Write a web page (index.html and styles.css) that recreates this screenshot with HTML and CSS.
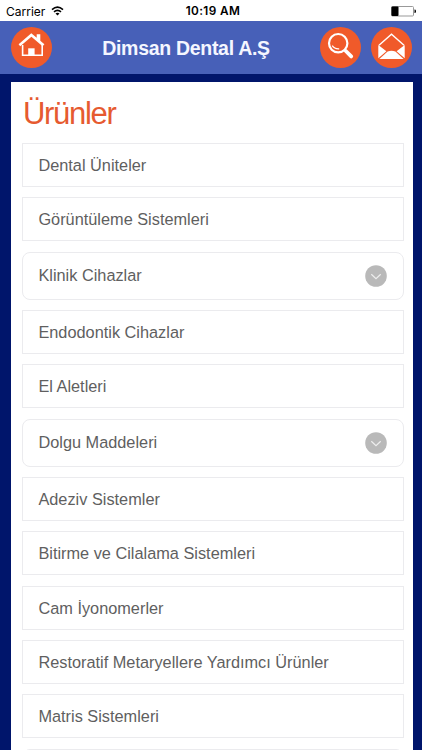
FILE: index.html
```html
<!DOCTYPE html>
<html lang="tr">
<head>
    <meta charset="UTF-8">
    <meta name="viewport" content="width=device-width, initial-scale=1">
    <title>Dimsan Dental A.Ş</title>
    <link rel="stylesheet" href="styles.css">
</head>
<body>
    <div class="status">
        <div class="carrier">
            <span>Carrier</span>
            <svg class="wifi" viewBox="0 0 13 10">
                <path d="M1 3.6 Q6.5 -1.2 12 3.6 M3 5.9 Q6.5 2.9 10 5.9" fill="none" stroke="#000" stroke-width="1.6"/>
                <path d="M4.5 7.5 Q6.5 5.9 8.5 7.5 L6.5 9.6 Z"/>
            </svg>
        </div>
        <span class="time">10:19 AM</span>
        <svg class="battery" viewBox="0 0 25 11">
            <rect x=".5" y=".5" width="22" height="9.5" rx="1" fill="#fff" stroke="#999"/>
            <rect x=".5" y=".5" width="7" height="9.5" rx="1"/>
            <path d="M23.5 3.5 h.5 q1 0 1 1.8 t-1 1.8 h-.5z"/>
        </svg>
    </div>

    <div class="header">
        <a class="btn">
            <svg viewBox="0 0 41 41">
                <path d="M11.6 18 V28.2 H31.2 V18" fill="none" stroke="#fff" stroke-width="1.6"/>
                <path d="M7.6 17.3 L20.3 6.3 L25.7 10.8 V7.2 H29.3 V13.8 L33.4 17.3 L31.6 19.2 L20.4 9.8 L9.2 19.2 Z" fill="#fff"/>
                <path d="M17.2 21.3 h6.4 v7.5 h-6.4z" fill="#fff"/>
            </svg>
        </a>
        <h1>Dimsan Dental A.Ş</h1>
        <a class="btn search">
            <svg viewBox="0 0 41 41">
                <circle cx="18.2" cy="16.2" r="9.2" fill="none" stroke="#fff" stroke-width="2.2"/>
                <path d="M12.2 18.7 Q14.5 22.2 19.2 21.9" fill="none" stroke="#fff" stroke-width="1.2"/>
                <path d="M24.4 22.6 L26.2 24.4" stroke="#fff" stroke-width="2.4"/>
                <path d="M25.8 24 L31.2 29.4" stroke="#fff" stroke-width="3.8" stroke-linecap="round"/>
            </svg>
        </a>
        <a class="btn mail">
            <svg viewBox="0 0 41 41">
                <path d="M8 18.2 L20.5 7.2 L33 18.2" fill="none" stroke="#fff" stroke-width="1.4"/>
                <path d="M7.3 18 L15.4 24.3 L7.3 31.3 Z M33.7 18 L25.6 24.3 L33.7 31.3 Z" fill="#fff"/>
                <path d="M8.4 32 L16.6 24.6 Q20.5 22.8 24.4 24.6 L32.6 32 Z" fill="#fff"/>
            </svg>
        </a>
    </div>

    <div class="content">
        <h2>Ürünler</h2>
        <ul class="menu">
            <li>Dental Üniteler</li>
            <li>Görüntüleme Sistemleri</li>
            <li class="sub">Klinik Cihazlar
                <svg viewBox="0 0 22 22"><circle cx="11" cy="11" r="10.8"/><path d="M6.3 9.3 L11 13.6 L15.7 9.3"/></svg>
            </li>
            <li>Endodontik Cihazlar</li>
            <li>El Aletleri</li>
            <li class="sub">Dolgu Maddeleri
                <svg viewBox="0 0 22 22"><circle cx="11" cy="11" r="10.8"/><path d="M6.3 9.3 L11 13.6 L15.7 9.3"/></svg>
            </li>
            <li>Adeziv Sistemler</li>
            <li>Bitirme ve Cilalama Sistemleri</li>
            <li>Cam İyonomerler</li>
            <li>Restoratif Metaryellere Yardımcı Ürünler</li>
            <li>Matris Sistemleri</li>
            <li class="sub"></li>
        </ul>
    </div>
</body>
</html>
```
FILE: styles.css
```css
*{
    box-sizing: border-box;
}
body{
    margin: 0;
    height: 750px;
    overflow: hidden;
    background-color: #00156b;
    font-family: "Liberation Sans", Arial, sans-serif;
}
.status{
    display: grid;
    grid-template-columns: 1fr auto 1fr;
    align-items: center;
    height: 21px;
    padding: 1px 6px 0 6px;
    background-color: #fff;
    color: #000;
    font-family: Inter, sans-serif;
    font-size: 12px;
}
.carrier{
    display: flex;
    align-items: center;
    gap: 6px;
}
.wifi{
    width: 13px;
    height: 10px;
    margin-top: -1px;
}
.time{
    margin-left: 4px;
    font-weight: 600;
    font-size: 11.8px;
    letter-spacing: 0.4px;
}
.battery{
    width: 25px;
    height: 11px;
    justify-self: end;
}
.header{
    display: flex;
    align-items: center;
    height: 53px;
    padding: 0 10px 0 11px;
    background-color: #4760b8;
}
.header h1{
    flex: 1;
    margin: 1px 0 0 0;
    text-align: center;
    color: #f4f6ff;
    font-size: 19.5px;
    line-height: 24px;
    font-weight: bold;
    letter-spacing: -0.3px;
}
.btn{
    width: 41px;
    height: 41px;
    border-radius: 50%;
    background-color: #f05a2a;
}
.btn svg{
    display: block;
}
.mail{
    margin-left: 10px;
}
.content{
    height: 668px;
    margin: 8px 9px 0 11px;
    padding: 12px 9px 0 12px;
    background-color: #fff;
    overflow: hidden;
}
.content h2{
    margin: 0;
    height: 49px;
    color: #e65a30;
    font-size: 31px;
    line-height: 40px;
    font-weight: normal;
    letter-spacing: -1.3px;
}
.menu{
    display: flex;
    flex-direction: column;
    gap: 10.3px;
    margin: 0 0 0 -0.6px;
    padding: 0;
    list-style: none;
}
.menu li{
    display: flex;
    flex-shrink: 0;
    align-items: center;
    justify-content: space-between;
    height: 44px;
    padding: 1px 16px 0 15px;
    border: 1px solid #ebebee;
    color: #5f5f5f;
    font-size: 16.32px;
}
.menu .sub{
    height: 48.2px;
    padding-top: 0;
    border-radius: 8px;
}
.sub svg{
    width: 22px;
    height: 22px;
    fill: #b9b9b9;
}
.sub path{
    fill: none;
    stroke: #eee;
    stroke-width: 1.2;
}
```
